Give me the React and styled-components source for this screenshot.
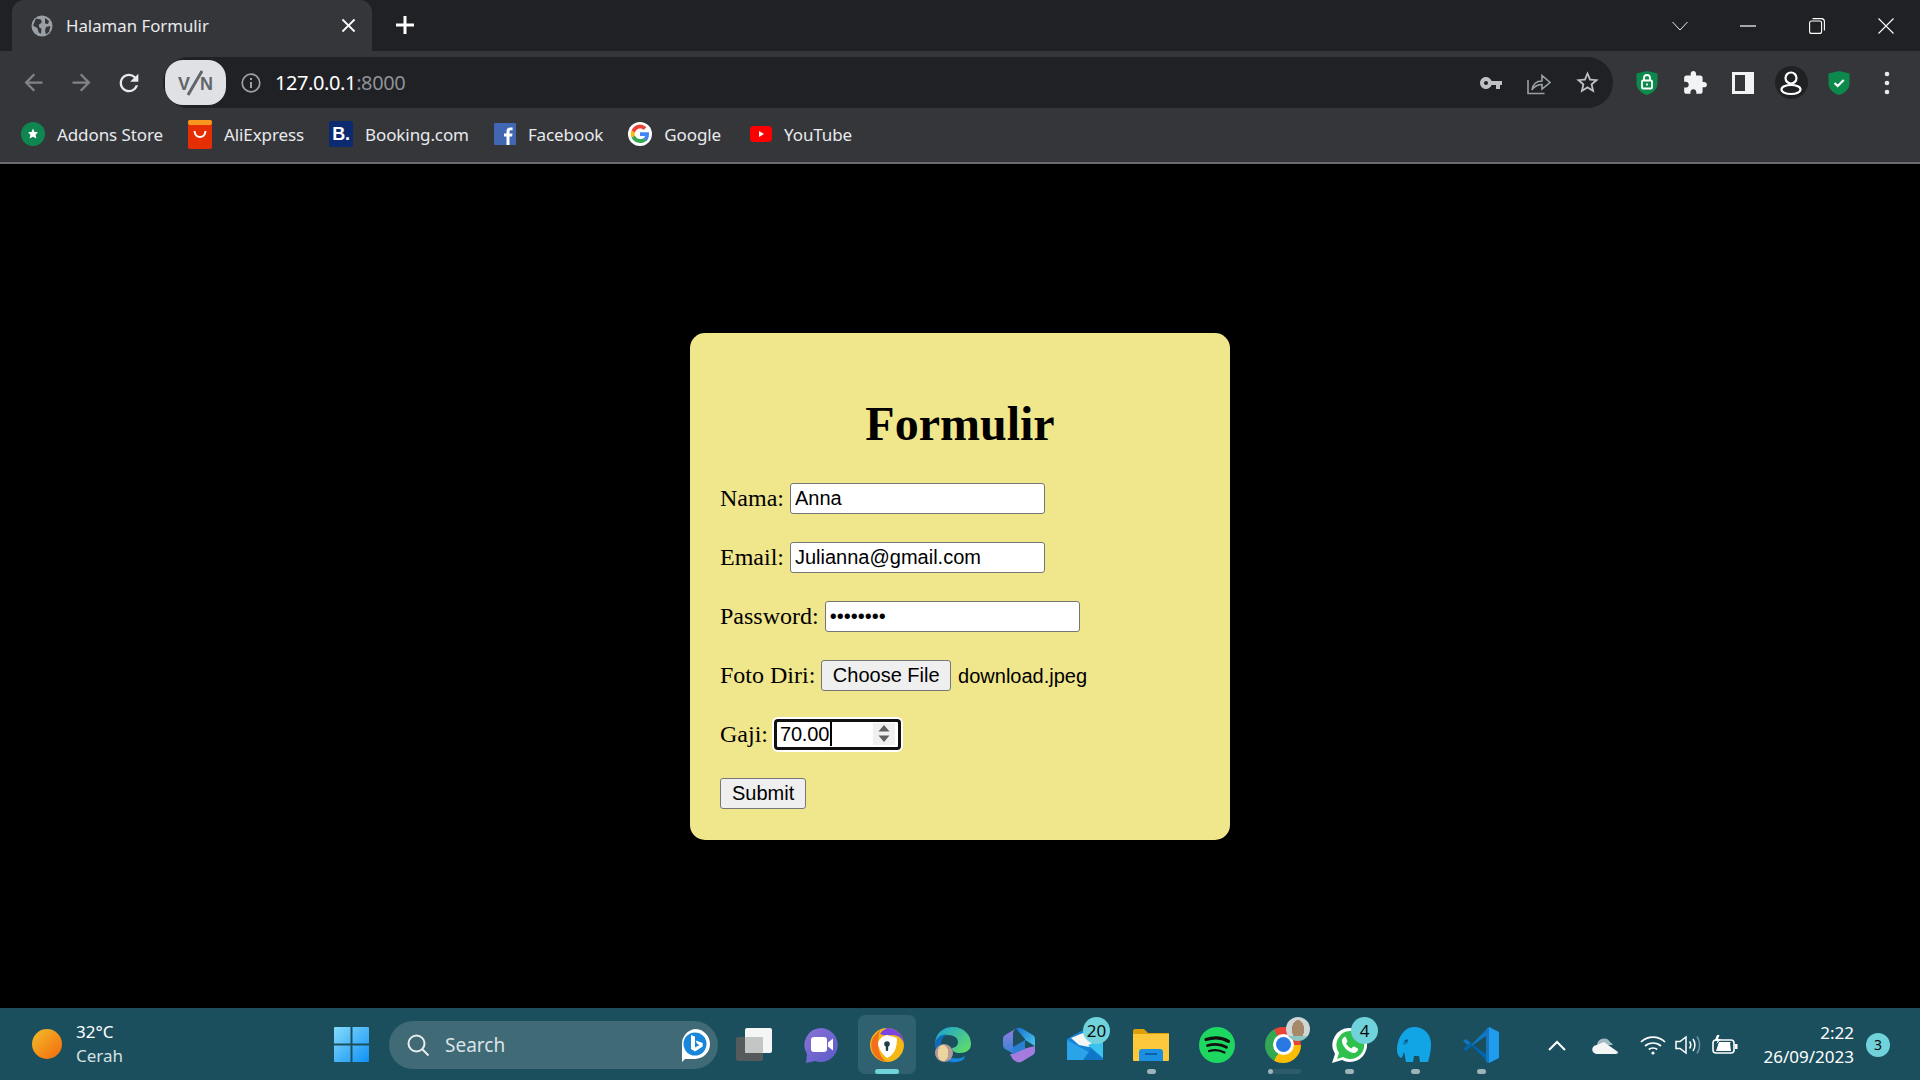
import React from 'react';
import styled, { createGlobalStyle } from 'styled-components';

const GlobalStyle = createGlobalStyle`
  html, body {
    margin: 0;
    padding: 0;
    height: 100%;
    overflow: hidden;
    background: #000;
  }
  #root { height: 100%; }
  * { box-sizing: border-box; }
`;

const UI_FONT = `"Noto Sans", "Open Sans", sans-serif`;

const Screen = styled.div`
  width: 1920px;
  height: 1080px;
  display: flex;
  flex-direction: column;
  font-family: ${UI_FONT};
`;

/* ---------- browser chrome ---------- */

const TabStrip = styled.div`
  height: 51px;
  background: #202124;
  display: flex;
  align-items: flex-end;
  padding-left: 12px;
  color: #e8eaed;
`;

const Tab = styled.div`
  width: 360px;
  height: 51px;
  background: #35363a;
  border-radius: 12px 12px 0 0;
  display: flex;
  align-items: center;
  padding: 0 12px 0 19px;
  gap: 13px;
`;

const TabTitle = styled.span`
  flex: 1;
  font-size: 16.8px;
  color: #e8eaed;
  white-space: nowrap;
`;

const NewTab = styled.div`
  width: 24px;
  height: 24px;
  margin: 0 0 1px 21px;
  align-self: center;
  display: flex;
`;

const WindowControls = styled.div`
  margin-left: auto;
  align-self: stretch;
  display: flex;
  align-items: center;
`;

const WinButton = styled.div`
  width: ${(p) => p.$w || 68}px;
  height: 42px;
  display: flex;
  align-items: center;
  justify-content: center;
`;

const Toolbar = styled.div`
  height: 113px;
  background: #35363a;
  border-bottom: 2px solid #6b6c6f;
  display: flex;
  flex-direction: column;
`;

const NavRow = styled.div`
  height: 57px;
  padding-top: 6px;
  display: flex;
  align-items: center;
`;

const NavButton = styled.div`
  width: 48px;
  height: 48px;
  display: flex;
  align-items: center;
  justify-content: center;
  flex: none;
`;

const NavGroup = styled.div`
  display: flex;
  padding-left: 9px;
  width: 163px;
`;

const Omnibox = styled.div`
  width: 1450px;
  height: 51px;
  background: #202124;
  border-radius: 26px;
  display: flex;
  align-items: center;
  padding: 0 2px 0 2px;
  flex: none;
`;

const VpnPill = styled.div`
  width: 61px;
  height: 45px;
  background: #dfe1e5;
  border-radius: 18px;
  display: flex;
  align-items: center;
  justify-content: center;
  flex: none;
`;

const InfoSlot = styled.div`
  width: 49px;
  display: flex;
  justify-content: center;
  flex: none;
`;

const Url = styled.div`
  font-size: 20px;
  letter-spacing: -0.4px;
  color: #fff;
  white-space: nowrap;
`;

const UrlPort = styled.span`
  color: #8e9297;
`;

const OmniActions = styled.div`
  margin-left: auto;
  display: flex;
`;

const ExtGroup = styled.div`
  display: flex;
  padding-left: 10px;
`;

const AvatarCircle = styled.div`
  width: 33px;
  height: 33px;
  border-radius: 50%;
  background: #202124;
  display: flex;
  align-items: center;
  justify-content: center;
`;

const BookmarkBar = styled.div`
  flex: 1;
  display: flex;
  align-items: center;
  padding: 0 0 2px 21px;
  gap: 25px;
`;

const Bookmark = styled.div`
  display: flex;
  align-items: center;
  gap: 12px;
  margin-left: ${(p) => p.$nudge || 0}px;
  font-size: 17px;
  letter-spacing: -0.1px;
  color: #e8eaed;
  white-space: nowrap;
`;

const BookingIcon = styled.span`
  width: 24px;
  height: 26px;
  background: #0b2a6f;
  border-radius: 2px;
  color: #fff;
  font: bold 18px "Liberation Sans", sans-serif;
  display: flex;
  align-items: center;
  justify-content: center;
`;

/* ---------- page with the form ---------- */

const Page = styled.main`
  flex: 1;
  background: #000;
  display: flex;
  align-items: center;
  justify-content: center;
`;

const FormCard = styled.form`
  width: 540px;
  height: 507px;
  background: #f0e68c;
  border-radius: 15px;
  padding: 30px;
  font-family: "Liberation Serif", "Times New Roman", serif;
  font-size: 24px;
  color: #000;
`;

const Title = styled.h1`
  font-size: 48px;
  line-height: 55px;
  font-weight: bold;
  text-align: center;
  margin: 33px 0 32px;
`;

const Row = styled.div`
  height: 59px;
  display: flex;
  align-items: flex-start;
  gap: 6px;
  line-height: 31px;
`;

const TextInput = styled.input`
  width: 255px;
  height: 31.5px;
  padding: 1px 4px;
  border: 1.5px solid #767676;
  border-radius: 3px;
  background: #fff;
  color: #000;
  font: 20px "Liberation Sans", Arial, sans-serif;
  outline: none;
`;

const GreyButton = styled.button`
  height: 31.5px;
  padding: 0 ${(p) => p.$pad || 11}px;
  border: 1.5px solid #767676;
  border-radius: 3px;
  background: #efefef;
  color: #000;
  font: 20px "Liberation Sans", Arial, sans-serif;
`;

const FileName = styled.span`
  font: 20px "Liberation Sans", Arial, sans-serif;
  line-height: 33px;
  margin-left: 1px;
`;

const NumberBox = styled.div`
  position: relative;
  width: 127px;
  height: 31px;
  border: 3px solid #101010;
  border-radius: 4px;
  background: #fff;
  box-shadow: 0 0 0 2px #fff;
  font: 20px/25px "Liberation Sans", Arial, sans-serif;
  letter-spacing: -0.2px;
  padding-left: 3px;
  display: flex;
`;

const Caret = styled.span`
  width: 1.5px;
  height: 24px;
  background: #000;
  margin-left: 1px;
`;

const Spinner = styled.div`
  position: absolute;
  right: 3px;
  top: 1px;
  width: 22px;
  height: 22px;
  background: #f0f0f0;
  display: flex;
  align-items: center;
  justify-content: center;
`;

/* ---------- windows taskbar ---------- */

const Taskbar = styled.footer`
  height: 72px;
  background: #1b4f5e;
  border-top: 1px solid #1f4a57;
  display: flex;
  align-items: center;
  color: #fff;
`;

const Weather = styled.div`
  width: 334px;
  padding: 0 0 2px 32px;
  display: flex;
  align-items: center;
  gap: 14px;
`;

const Sun = styled.span`
  width: 30px;
  height: 30px;
  border-radius: 50%;
  background: linear-gradient(135deg, #f2bd2c, #f4690b);
`;

const WeatherText = styled.div`
  font-size: 17px;
  line-height: 24px;
`;

const WeatherSub = styled.div`
  color: #d5e0e3;
`;

const StartSlot = styled.div`
  width: 55px;
  display: flex;
`;

const SearchBox = styled.div`
  width: 329px;
  height: 48px;
  border-radius: 24px;
  background: #3f6a76;
  display: flex;
  align-items: center;
  padding-left: 17px;
  gap: 15px;
  font-size: 19px;
  color: #dbe4e7;
  position: relative;
`;

const BingBadge = styled.div`
  position: absolute;
  right: 7px;
  top: 7px;
`;

const TaskIcons = styled.div`
  margin-left: 4px;
  display: flex;
`;

const Slot = styled.div`
  position: relative;
  width: 66px;
  height: 59px;
  display: flex;
  align-items: center;
  justify-content: center;
  &::before {
    content: '';
    display: ${(p) => (p.$active ? 'block' : 'none')};
    position: absolute;
    inset: 0 4px;
    border-radius: 7px;
    background: #2f6170;
  }
  & > * {
    position: relative;
  }
`;

const RunDot = styled.span`
  position: absolute !important;
  left: 50%;
  bottom: 0;
  height: 5px;
  width: ${(p) => p.$w || 9}px;
  margin-left: -${(p) => (p.$w || 9) / 2}px;
  border-radius: 3px;
  background: ${(p) => p.$color || '#9db4bb'};
`;

const ChromeTrack = styled.span`
  position: absolute !important;
  left: 18px;
  bottom: 0;
  width: 33px;
  height: 5px;
  border-radius: 3px;
  background: #2c5c6a;
  &::before {
    content: '';
    display: block;
    width: 5px;
    height: 5px;
    border-radius: 50%;
    background: #9db4bb;
  }
`;

const CountBadge = styled.span`
  position: absolute !important;
  top: 2px;
  left: ${(p) => p.$left}px;
  height: 27px;
  min-width: 27px;
  padding: 0 3px;
  border-radius: 14px;
  background: #70d3db;
  color: #0a0a0a;
  font-size: 17px;
  line-height: 27px;
  text-align: center;
`;

const ChromeLogo = styled.span`
  width: 36px;
  height: 36px;
  border-radius: 50%;
  background: conic-gradient(#ea4335 0deg 90deg, #fbbc04 90deg 210deg, #34a853 210deg 330deg, #ea4335 330deg);
  display: flex;
  align-items: center;
  justify-content: center;
  &::after {
    content: '';
    width: 15px;
    height: 15px;
    border-radius: 50%;
    background: #2a78e4;
    box-shadow: 0 0 0 3px #fff;
  }
`;

const PhotoBadge = styled.span`
  position: absolute !important;
  top: ${(p) => p.$top}px;
  left: ${(p) => p.$left}px;
  width: ${(p) => p.$size}px;
  height: ${(p) => p.$size}px;
  border-radius: 50%;
  background: ${(p) => p.$bg};
`;

const Tray = styled.div`
  margin-left: auto;
  display: flex;
  align-items: center;
  padding-right: 30px;
`;

const TrayIcon = styled.div`
  margin-left: ${(p) => p.$gap}px;
  display: flex;
`;

const Clock = styled.div`
  width: 116px;
  text-align: right;
  font-size: 17px;
  line-height: 24px;
`;

const NoticeDot = styled.div`
  margin-left: 12px;
  width: 24px;
  height: 24px;
  border-radius: 50%;
  background: #70d3db;
  color: #0a0a0a;
  font-size: 14px;
  line-height: 24px;
  text-align: center;
`;

/* ---------- icons ---------- */

const MatIcon = ({ d, size = 24, color = '#fff', vb = 24 }) => (
  <svg width={size} height={size} viewBox={`0 0 ${vb} ${vb}`} fill={color}>
    <path d={d} />
  </svg>
);

const GlobeIcon = () => (
  <svg width="22" height="22" viewBox="0 0 22 22">
    <circle cx="11" cy="11" r="10.5" fill="#9aa0a6" />
    <path d="M5 3.500l5 1 .8 3-3 2.200.4 2.500 2.300 1.500-.5 5-2.500-1.500-1-4L2 10.500zM14 3l4 3-1 3-3-.5zM15 12l4.500-1-1.500 6-3 2.500-1-4z" fill="#35363a" />
  </svg>
);

const ShieldIcon = ({ lock }) => (
  <svg width="24" height="26" viewBox="0 0 24 26">
    <path d="M12 1l10.500 2.500V13c0 6-4.500 10-10.500 12C6 23 1.500 19 1.500 13V3.500z" fill="#0b8a4c" />
    {lock ? (
      <g fill="none" stroke="#fff" strokeWidth="1.800">
        <rect x="7" y="10.500" width="10" height="8" rx="1" />
        <path d="M9 10.500V8a3 3 0 0 1 6 0v2.500" />
        <path d="M12 13.500v2" />
      </g>
    ) : (
      <path d="M7.500 13l3.200 3 6-6" fill="none" stroke="#fff" strokeWidth="2.200" />
    )}
  </svg>
);

const PersonIcon = () => (
  <svg width="24" height="26" viewBox="0 0 24 26" fill="none" stroke="#fff" strokeWidth="2.200">
    <circle cx="12" cy="8" r="5.500" />
    <ellipse cx="12" cy="19.500" rx="9.500" ry="4.500" />
  </svg>
);

const AliIcon = () => (
  <svg width="24" height="29" viewBox="0 0 24 29">
    <rect width="24" height="29" rx="2" fill="#e62e04" />
    <rect width="24" height="5" rx="2" fill="#f7971d" />
    <path d="M6.500 11c.5 8 10.500 8 11 0" fill="none" stroke="#fff" strokeWidth="2" />
  </svg>
);

const FacebookIcon = () => (
  <svg width="22" height="22" viewBox="0 0 22 22">
    <rect width="22" height="22" rx="1" fill="#4267b2" />
    <path d="M15.500 22v-8.500h2.600l.4-3h-3V8.700c0-.9.300-1.500 1.500-1.500h1.600V4.500c-.5 0-1.300-.1-2.300-.1-2.300 0-3.800 1.400-3.800 3.900v2.200H10v3h2.500V22z" fill="#fff" />
  </svg>
);

const GoogleIcon = () => (
  <svg width="24" height="24" viewBox="0 0 24 24">
    <circle cx="12" cy="12" r="12" fill="#fff" />
    <g transform="translate(12 12) scale(1.28) translate(-12 -12)">
      <path d="M19 12.200c0-.5 0-1-.1-1.500H12v2.900h4a3.400 3.400 0 0 1-1.500 2.200l2.400 1.900c1.400-1.300 2.100-3.200 2.100-5.500z" fill="#4285f4" />
      <path d="M12 19c2 0 3.600-.7 4.900-1.800l-2.400-1.900c-.7.500-1.500.7-2.500.7-1.900 0-3.500-1.300-4.100-3l-2.500 1.900C6.600 17.300 9.100 19 12 19z" fill="#34a853" />
      <path d="M7.900 13c-.3-.9-.3-1.100 0-2L5.400 9.100a7 7 0 0 0 0 5.800z" fill="#fbbc05" />
      <path d="M12 7.800c1.100 0 2 .4 2.800 1.100L17 6.800A7 7 0 0 0 5.400 9.100L7.900 11c.6-1.800 2.200-3.200 4.100-3.200z" fill="#ea4335" />
    </g>
  </svg>
);

const YoutubeIcon = () => (
  <svg width="22" height="16" viewBox="0 0 22 16">
    <rect width="22" height="16" rx="4" fill="#f00" />
    <path d="M9 5l5 3-5 3z" fill="#fff" />
  </svg>
);

const AddonsIcon = () => (
  <svg width="24" height="24" viewBox="0 0 24 24">
    <circle cx="12" cy="12" r="12" fill="#0f8650" />
    <path d="M12 6.500l1.500 3.500 3.500.3-2.400 2.500.8 3.700-3.400-1.800-3.400 1.800.8-3.700L7 10.300l3.500-.3z" fill="#fff" />
  </svg>
);

const StartIcon = () => (
  <svg width="35" height="35" viewBox="0 0 35 35">
    <defs>
      <linearGradient id="win" x1="0" y1="0" x2="1" y2="1">
        <stop offset="0" stopColor="#86dcfb" />
        <stop offset="1" stopColor="#0f90f5" />
      </linearGradient>
    </defs>
    <path d="M1 0h15.500v16.500H0V1a1 1 0 0 1 1-1zM18.500 0H34a1 1 0 0 1 1 1v15.500H18.500zM0 18.500h16.500V35H1a1 1 0 0 1-1-1zM18.500 18.500H35V34a1 1 0 0 1-1 1H18.500z" fill="url(#win)" />
  </svg>
);

const SearchIcon = () => (
  <svg width="24" height="24" viewBox="0 0 24 24" fill="none" stroke="#e8eef0" strokeWidth="2">
    <circle cx="10.500" cy="10.500" r="8" />
    <path d="M16.500 16.500l6 6" />
  </svg>
);

const BingIcon = () => (
  <svg width="32" height="34" viewBox="0 0 32 34">
    <path d="M16 1a15 15 0 0 1 0 30H6l-3 3V16A15 15 0 0 1 16 1z" fill="#fff" />
    <circle cx="16" cy="16" r="11.500" fill="#1a86d9" />
    <path d="M12 7l4 1.500v11l4.500-2.500-2.500-1.200-1.300-3.300 7 2.500v3.500L16 23.500l-4-2.500z" fill="#fff" />
  </svg>
);

const TaskViewIcon = () => (
  <svg width="38" height="34" viewBox="0 0 38 34">
    <rect x="0" y="9" width="27" height="24" rx="2" fill="#555a5c" />
    <rect x="9" y="0" width="27" height="25" rx="2" fill="#f4f5f5" />
    <rect x="9" y="9" width="18" height="16" rx="1" fill="#c4c6c6" />
  </svg>
);

const MeetIcon = () => (
  <svg width="36" height="36" viewBox="0 0 36 36">
    <defs>
      <linearGradient id="meet" x1="0" y1="0" x2="1" y2="1">
        <stop offset="0" stopColor="#8a72d6" />
        <stop offset="1" stopColor="#5a5bc8" />
      </linearGradient>
    </defs>
    <path d="M18 1a17 17 0 1 1-6 33l-9 2 1-9A17 17 0 0 1 18 1z" fill="url(#meet)" />
    <rect x="8" y="10" width="16" height="15" rx="3" fill="#fff" />
    <path d="M25 15.500l5-4v12l-5-4z" fill="#fff" />
  </svg>
);

const SecureBrowserIcon = () => (
  <svg width="34" height="34" viewBox="0 0 34 34">
    <circle cx="17" cy="17" r="17" fill="#f5b815" />
    <path d="M17 0a17 17 0 0 1 17 17c-1-6-5-10-12-10-5 0-8 1-12-1A17 17 0 0 1 17 0z" fill="#7a45e0" />
    <path d="M3 9.500A17 17 0 0 0 17 34C9 30 6 18 10 2z" fill="#f2701c" />
    <path d="M17 7l10 3c0 10-3 17-10 20-4-3-8-8-9-14 0-4 4-8 9-9z" fill="#fff" />
    <circle cx="17" cy="16" r="2.800" fill="#1d3f4a" />
    <rect x="15.800" y="17" width="2.400" height="6" rx="1" fill="#1d3f4a" />
  </svg>
);

const EdgeIcon = () => (
  <svg width="36" height="36" viewBox="0 0 36 36">
    <defs>
      <linearGradient id="edgeA" x1="0" y1="0" x2="1" y2="0.800">
        <stop offset="0" stopColor="#1a9fd8" />
        <stop offset="1" stopColor="#5fdc6a" />
      </linearGradient>
    </defs>
    <path d="M18 0c11 0 18 8 18 17 0 6-5 9-11 9-5 0-8-2-8-5 4-.5 6-3 6-6 0-4-4-7-10-7S2 11 0 16C1 6 8 0 18 0z" fill="url(#edgeA)" />
    <path d="M0 16c1.500-6 6-8.500 12-8.500-4 1.500-6 5.500-6 10 0 8 7 15 17 14 3-.3 5-1 7-2.500-3 4-7 6.500-13 6.500C8 36-1 27 0 16z" fill="#0f6cbd" />
    <path d="M6 17.500c0 8 7 15 17 14 3-.3 5-1 7-2.500l-1 3c-3 3-9 4-14 2C9 31 5 24 6 17.500z" fill="#1888dc" />
  </svg>
);

const CopilotIcon = () => (
  <svg width="32" height="36" viewBox="0 0 32 36">
    <defs>
      <linearGradient id="cpA" x1="0" y1="0" x2="0" y2="1">
        <stop offset="0" stopColor="#9a7ae0" />
        <stop offset="1" stopColor="#2f86d8" />
      </linearGradient>
      <linearGradient id="cpB" x1="0" y1="0" x2="1" y2="1">
        <stop offset="0" stopColor="#1b6fd0" />
        <stop offset="1" stopColor="#48c8ee" />
      </linearGradient>
    </defs>
    <path d="M13 1.500a6 6 0 0 1 6 0l10 6a5 5 0 0 1 3 4.500v7L22 13v-1z" fill="url(#cpB)" />
    <path d="M0 12a5 5 0 0 1 3-4.500l10-6c-3 2-3 4-3 6v19l-7-4a5 5 0 0 1-3-4.500z" fill="url(#cpA)" />
    <path d="M32 19v5a5 5 0 0 1-3 4.500l-10 6a6 6 0 0 1-6 0l-3-2-3-5 15-6z" fill="#a67be0" />
    <path d="M10 20l12-7v9l-12 5z" fill="#2b7fd4" />
  </svg>
);

const MailIcon = () => (
  <svg width="36" height="30" viewBox="0 0 36 30">
    <path d="M0 9L16 0l20 9v20a1 1 0 0 1-1 1H1a1 1 0 0 1-1-1z" fill="#1583d6" />
    <path d="M4 8l12-5 14 5-8 9-10-2z" fill="#f4f5f5" />
    <path d="M36 9v19L21 15z" fill="#3bc3f0" />
    <path d="M0 10l18 10 18 10H1a1 1 0 0 1-1-1z" fill="#2aa3e8" />
    <path d="M36 29a1 1 0 0 1-1 1H16l8-11z" fill="#0f76c8" />
  </svg>
);

const FolderIcon = () => (
  <svg width="36" height="32" viewBox="0 0 36 32">
    <path d="M0 2a2 2 0 0 1 2-2h9l4 4h21v6H0z" fill="#dc9f07" />
    <path d="M0 5h36v26a1 1 0 0 1-1 1H1a1 1 0 0 1-1-1z" fill="#fdc83c" />
    <path d="M6 32v-9a3 3 0 0 1 3-3h18a3 3 0 0 1 3 3v9z" fill="#1b8fe0" />
    <path d="M12 25h12" stroke="#0c5fa8" strokeWidth="2" />
  </svg>
);

const SpotifyIcon = () => (
  <svg width="36" height="36" viewBox="0 0 36 36" fill="none" stroke="#111" strokeLinecap="round">
    <circle cx="18" cy="18" r="18" fill="#1ed760" stroke="none" />
    <path d="M7 12.500c8-2.500 16-2 22.500 1.800" strokeWidth="3.200" />
    <path d="M8.500 18.500c7-2 13.500-1.500 19 1.800" strokeWidth="2.800" />
    <path d="M10 24c5.500-1.500 11-1 15.500 1.500" strokeWidth="2.300" />
  </svg>
);

const WhatsappIcon = () => (
  <svg width="36" height="36" viewBox="0 0 36 36">
    <path d="M19 1a17 17 0 1 1-8 32L1 36l3-9A17 17 0 0 1 19 1z" fill="#fff" />
    <path d="M19 4a14 14 0 1 1-7 26l-6 2 2-6A14 14 0 0 1 19 4z" fill="#30c04e" />
    <path d="M13.500 10c-1 .3-2.500 2-2.500 4 0 5 6 11.500 11.500 12 2 .2 4-1.500 4.500-3 .2-1 0-1.500-.5-1.800l-3.500-1.700c-.5-.2-.9 0-1.200.4l-1.300 1.600c-2-.7-4.500-3-5.500-5l1.200-1.500c.3-.4.300-.8.100-1.200l-1.500-3.500c-.2-.4-.8-.6-1.300-.3z" fill="#fff" />
  </svg>
);

const ElephantIcon = () => (
  <svg width="36" height="36" viewBox="0 0 36 36">
    <path d="M17 0c10 0 17 7 17 17 0 6-1 11-3 18h-8l-1-6h-5l-1 6h-7c-1-4-1-8-2-10-1 3-2 5-2 6-2 0-5-3-5-8 0-10 6-23 17-23z" fill="#12a5e6" />
    <path d="M7 13l4-1-1 5-4 1z" fill="#0b7fb6" />
    <circle cx="9.500" cy="14" r="1.200" fill="#06526f" />
  </svg>
);

const VsCodeIcon = () => (
  <svg width="36" height="36" viewBox="0 0 36 36">
    <path d="M26 0l10 5v26l-10 5z" fill="#1f9cf0" />
    <path d="M26 0L9 17l-6-5-3 2 7 6 19-13z" fill="#0f78c2" />
    <path d="M26 36L9 19l-6 5-3-2 7-6 19 13z" fill="#0065a9" />
    <path d="M26 0v36l-3-1V2z" fill="#1576bd" />
  </svg>
);

const ChevronUp = () => (
  <svg width="20" height="12" viewBox="0 0 20 12" fill="none" stroke="#fff" strokeWidth="2">
    <path d="M2 11l8-8 8 8" />
  </svg>
);

const CloudIcon = () => (
  <svg width="26" height="18" viewBox="0 0 26 18">
    <path d="M5 9a7 7 0 0 1 13-3 6 6 0 0 1 3 3z" fill="#9db9c1" />
    <path d="M5 18a4.500 4.500 0 0 1-.5-9l7.500-3 14 10c0 1-1 2-2 2z" fill="#f4f6f6" />
  </svg>
);

const WifiIcon = () => (
  <svg width="26" height="20" viewBox="0 0 26 20" fill="none" stroke="#fff" strokeWidth="1.700">
    <path d="M1 7c7-6.500 17-6.500 24 0" />
    <path d="M5 11c4.500-4 11.500-4 16 0" />
    <path d="M8.800 14.500c2.300-2 6-2 8.400 0" />
    <circle cx="13" cy="18" r="1.600" fill="#fff" stroke="none" />
  </svg>
);

const SpeakerIcon = () => (
  <svg width="26" height="22" viewBox="0 0 26 22" fill="none" stroke="#fff" strokeWidth="1.500">
    <path d="M1 7.500h4L11 3v16l-6-4.500H1z" />
    <path d="M14.500 7.500c1.500 2 1.500 5 0 7" />
    <path d="M18 5c2.500 3.500 2.500 8.500 0 12" />
    <path d="M22 2.500c3.500 5 3.500 12 0 17" stroke="#6f949e" />
  </svg>
);

const BatteryIcon = () => (
  <svg width="26" height="20" viewBox="0 0 26 20">
    <rect x="1" y="5" width="21" height="13" rx="3" fill="none" stroke="#fff" strokeWidth="1.600" />
    <path d="M4 16l3-9h12l-1 1 1 8z" fill="#fff" />
    <rect x="23" y="9" width="2.500" height="5" fill="#fff" />
    <path d="M5 0L2.500 6h3l-1 3L9 4H6l1.500-4z" fill="#fff" />
  </svg>
);

const M = {
  back: 'M20 11H7.830l5.590-5.590L12 4l-8 8 8 8 1.410-1.410L7.830 13H20v-2z',
  forward: 'M12 4l-1.410 1.410L16.170 11H4v2h12.170l-5.580 5.590L12 20l8-8z',
  reload: 'M17.650 6.350A7.958 7.958 0 0 0 12 4c-4.420 0-7.990 3.580-7.990 8s3.570 8 7.990 8c3.730 0 6.840-2.550 7.730-6h-2.080A5.990 5.990 0 0 1 12 18c-3.310 0-6-2.690-6-6s2.690-6 6-6c1.660 0 3.140.690 4.220 1.780L13 11h7V4l-2.350 2.350z',
  key: 'M12.650 10C11.830 7.670 9.610 6 7 6c-3.310 0-6 2.690-6 6s2.690 6 6 6c2.610 0 4.830-1.670 5.650-4H17v4h4v-4h2v-4H12.650zM7 14c-1.100 0-2-.9-2-2s.9-2 2-2 2 .9 2 2-.9 2-2 2z',
  star: 'M22 9.240l-7.190-.62L12 2 9.190 8.630 2 9.240l5.460 4.730L5.820 21 12 17.270 18.180 21l-1.630-7.030L22 9.240zM12 15.400l-3.760 2.270 1-4.280-3.320-2.880 4.380-.38L12 6.100l1.710 4.040 4.380.38-3.320 2.880 1 4.280L12 15.400z',
  puzzle: 'M20.500 11H19V7c0-1.100-.9-2-2-2h-4V3.500C13 2.120 11.880 1 10.500 1S8 2.120 8 3.500V5H4c-1.100 0-1.990.9-1.990 2v3.800H3.500c1.490 0 2.700 1.210 2.700 2.700s-1.210 2.700-2.700 2.700H2V20c0 1.100.9 2 2 2h3.800v-1.500c0-1.490 1.210-2.700 2.700-2.700 1.490 0 2.700 1.210 2.700 2.700V22H17c1.100 0 2-.9 2-2v-4h1.500c1.380 0 2.500-1.120 2.500-2.500S21.880 11 20.500 11z',
  close: 'M19 6.410L17.590 5 12 10.590 6.410 5 5 6.410 10.590 12 5 17.590 6.410 19 12 13.410 17.590 19 19 17.590 13.410 12z',
  plus: 'M21 13.500h-7.500V21h-3v-7.500H3v-3h7.500V3h3v7.500H21z',
};

const bookmarks = [
  { label: 'Addons Store', icon: <AddonsIcon /> },
  { label: 'AliExpress', icon: <AliIcon /> },
  { label: 'Booking.com', icon: <BookingIcon>B.</BookingIcon> },
  { label: 'Facebook', icon: <FacebookIcon /> },
  { label: 'Google', icon: <GoogleIcon /> },
  { label: 'YouTube', icon: <YoutubeIcon />, nudge: 4 },
];

function BrowserChrome() {
  return (
    <>
      <TabStrip>
        <Tab>
          <GlobeIcon />
          <TabTitle>Halaman Formulir</TabTitle>
          <MatIcon d={M.close} size={23} />
        </Tab>
        <NewTab>
          <MatIcon d={M.plus} size={24} />
        </NewTab>
        <WindowControls>
          <WinButton $w={68}>
            <svg width="16" height="10" viewBox="0 0 16 10" fill="none" stroke="#e8eaed"><path d="M.5 1L8 9l7.500-8" /></svg>
          </WinButton>
          <WinButton $w={68}>
            <svg width="16" height="2" viewBox="0 0 16 2"><path d="M0 1h16" stroke="#fff" strokeWidth="1.200" /></svg>
          </WinButton>
          <WinButton $w={69}>
            <svg width="16" height="16" viewBox="0 0 16 16" fill="none" stroke="#fff" strokeWidth="1.100">
              <rect x=".6" y="3" width="12" height="12.400" rx="2" />
              <path d="M3.500.6h9a3 3 0 0 1 2.900 3v9" />
            </svg>
          </WinButton>
          <WinButton $w={69}>
            <svg width="16" height="16" viewBox="0 0 16 16" stroke="#fff" strokeWidth="1.100"><path d="M.5.500l15 15M15.500.500l-15 15" /></svg>
          </WinButton>
        </WindowControls>
      </TabStrip>
      <Toolbar>
        <NavRow>
          <NavGroup>
            <NavButton><MatIcon d={M.back} size={27} color="#80848a" /></NavButton>
            <NavButton><MatIcon d={M.forward} size={27} color="#80848a" /></NavButton>
            <NavButton><MatIcon d={M.reload} size={28} color="#e8eaed" /></NavButton>
          </NavGroup>
          <Omnibox>
            <VpnPill>
              <svg width="40" height="28" viewBox="0 0 40 28">
                <text x="2" y="21" fontFamily="Liberation Sans, sans-serif" fontWeight="bold" fontSize="18" fill="#62656a">V</text>
                <text x="24" y="21" fontFamily="Liberation Sans, sans-serif" fontWeight="bold" fontSize="18" fill="#62656a">N</text>
                <path d="M12 26L26 2" stroke="#62656a" strokeWidth="3" />
              </svg>
            </VpnPill>
            <InfoSlot>
              <svg width="20" height="20" viewBox="0 0 20 20" fill="none" stroke="#9aa0a6" strokeWidth="1.700">
                <circle cx="10" cy="10" r="8.800" />
                <path d="M10 9v6M10 5v2" strokeWidth="2" />
              </svg>
            </InfoSlot>
            <Url>127.0.0.1<UrlPort>:8000</UrlPort></Url>
            <OmniActions>
              <NavButton><MatIcon d={M.key} size={24} color="#bdc1c6" /></NavButton>
              <NavButton>
                <svg width="24" height="24" viewBox="0 0 24 24" fill="none" stroke="#9aa0a6" strokeWidth="1.600">
                  <path d="M1 9v13.500h16.500" />
                  <path d="M5 19c1-6 5-9 10-9V4.500l8 7-8 6.500v-4.500c-4 0-7 1.500-10 5z" />
                </svg>
              </NavButton>
              <NavButton><MatIcon d={M.star} size={27} color="#bdc1c6" /></NavButton>
            </OmniActions>
          </Omnibox>
          <ExtGroup>
            <NavButton><ShieldIcon lock /></NavButton>
            <NavButton><MatIcon d={M.puzzle} size={26} color="#f1f3f4" /></NavButton>
            <NavButton>
              <svg width="22" height="22" viewBox="0 0 22 22">
                <path d="M0 0h22v22H0zM3 3v16h10V3z" fill="#f1f3f4" fillRule="evenodd" />
              </svg>
            </NavButton>
            <NavButton><AvatarCircle><PersonIcon /></AvatarCircle></NavButton>
            <NavButton><ShieldIcon /></NavButton>
            <NavButton>
              <svg width="6" height="24" viewBox="0 0 6 24" fill="#e8eaed">
                <circle cx="3" cy="3" r="2.300" />
                <circle cx="3" cy="12" r="2.300" />
                <circle cx="3" cy="21" r="2.300" />
              </svg>
            </NavButton>
          </ExtGroup>
        </NavRow>
        <BookmarkBar>
          {bookmarks.map((b) => (
            <Bookmark key={b.label} $nudge={b.nudge}>
              {b.icon}
              {b.label}
            </Bookmark>
          ))}
        </BookmarkBar>
      </Toolbar>
    </>
  );
}

function Formulir() {
  return (
    <Page>
      <FormCard onSubmit={(e) => e.preventDefault()}>
        <Title>Formulir</Title>
        <Row>
          <label>Nama:</label>
          <TextInput type="text" defaultValue="Anna" readOnly />
        </Row>
        <Row>
          <label>Email:</label>
          <TextInput type="text" defaultValue="Julianna@gmail.com" readOnly />
        </Row>
        <Row>
          <label>Password:</label>
          <TextInput type="password" defaultValue="12345678" readOnly />
        </Row>
        <Row>
          <label>Foto Diri:</label>
          <GreyButton type="button" $pad={10.5}>Choose File</GreyButton>
          <FileName>download.jpeg</FileName>
        </Row>
        <Row>
          <label>Gaji:</label>
          <NumberBox>
            70.00
            <Caret />
            <Spinner>
              <svg width="12" height="17" viewBox="0 0 12 17" fill="#5f5f5f">
                <path d="M6 0l5.500 6.500H.5zM6 17L.5 10.500h11z" />
              </svg>
            </Spinner>
          </NumberBox>
        </Row>
        <Row>
          <GreyButton type="submit">Submit</GreyButton>
        </Row>
      </FormCard>
    </Page>
  );
}

const edgePhoto = 'radial-gradient(ellipse 30% 45% at 45% 50%, #ecd59c 95%, transparent), #b49a98';
const chromePhoto = 'linear-gradient(transparent 78%, #8cc7c4 78%), radial-gradient(ellipse 26% 40% at 50% 52%, #a58a6a 95%, transparent), #d0d5d6';

function WindowsTaskbar() {
  return (
    <Taskbar>
      <Weather>
        <Sun />
        <WeatherText>
          32°C
          <WeatherSub>Cerah</WeatherSub>
        </WeatherText>
      </Weather>
      <StartSlot><StartIcon /></StartSlot>
      <SearchBox>
        <SearchIcon />
        Search
        <BingBadge><BingIcon /></BingBadge>
      </SearchBox>
      <TaskIcons>
        <Slot><TaskViewIcon /></Slot>
        <Slot><MeetIcon /></Slot>
        <Slot $active>
          <SecureBrowserIcon />
          <RunDot $w={24} $color="#6fd3da" />
        </Slot>
        <Slot>
          <EdgeIcon />
          <PhotoBadge $top={29} $left={15} $size={18} $bg={edgePhoto} />
        </Slot>
        <Slot><CopilotIcon /></Slot>
        <Slot>
          <MailIcon />
          <CountBadge $left={31}>20</CountBadge>
        </Slot>
        <Slot>
          <FolderIcon />
          <RunDot />
        </Slot>
        <Slot><SpotifyIcon /></Slot>
        <Slot>
          <ChromeLogo />
          <PhotoBadge $top={2} $left={36} $size={24} $bg={chromePhoto} />
          <ChromeTrack />
        </Slot>
        <Slot>
          <WhatsappIcon />
          <CountBadge $left={35}>4</CountBadge>
          <RunDot />
        </Slot>
        <Slot>
          <ElephantIcon />
          <RunDot />
        </Slot>
        <Slot>
          <VsCodeIcon />
          <RunDot />
        </Slot>
      </TaskIcons>
      <Tray>
        <TrayIcon $gap={0}><ChevronUp /></TrayIcon>
        <TrayIcon $gap={25}><CloudIcon /></TrayIcon>
        <TrayIcon $gap={22}><WifiIcon /></TrayIcon>
        <TrayIcon $gap={9}><SpeakerIcon /></TrayIcon>
        <TrayIcon $gap={11}><BatteryIcon /></TrayIcon>
        <Clock>
          2:22
          <div>26/09/2023</div>
        </Clock>
        <NoticeDot>3</NoticeDot>
      </Tray>
    </Taskbar>
  );
}

export default function App() {
  return (
    <Screen>
      <GlobalStyle />
      <BrowserChrome />
      <Formulir />
      <WindowsTaskbar />
    </Screen>
  );
}
